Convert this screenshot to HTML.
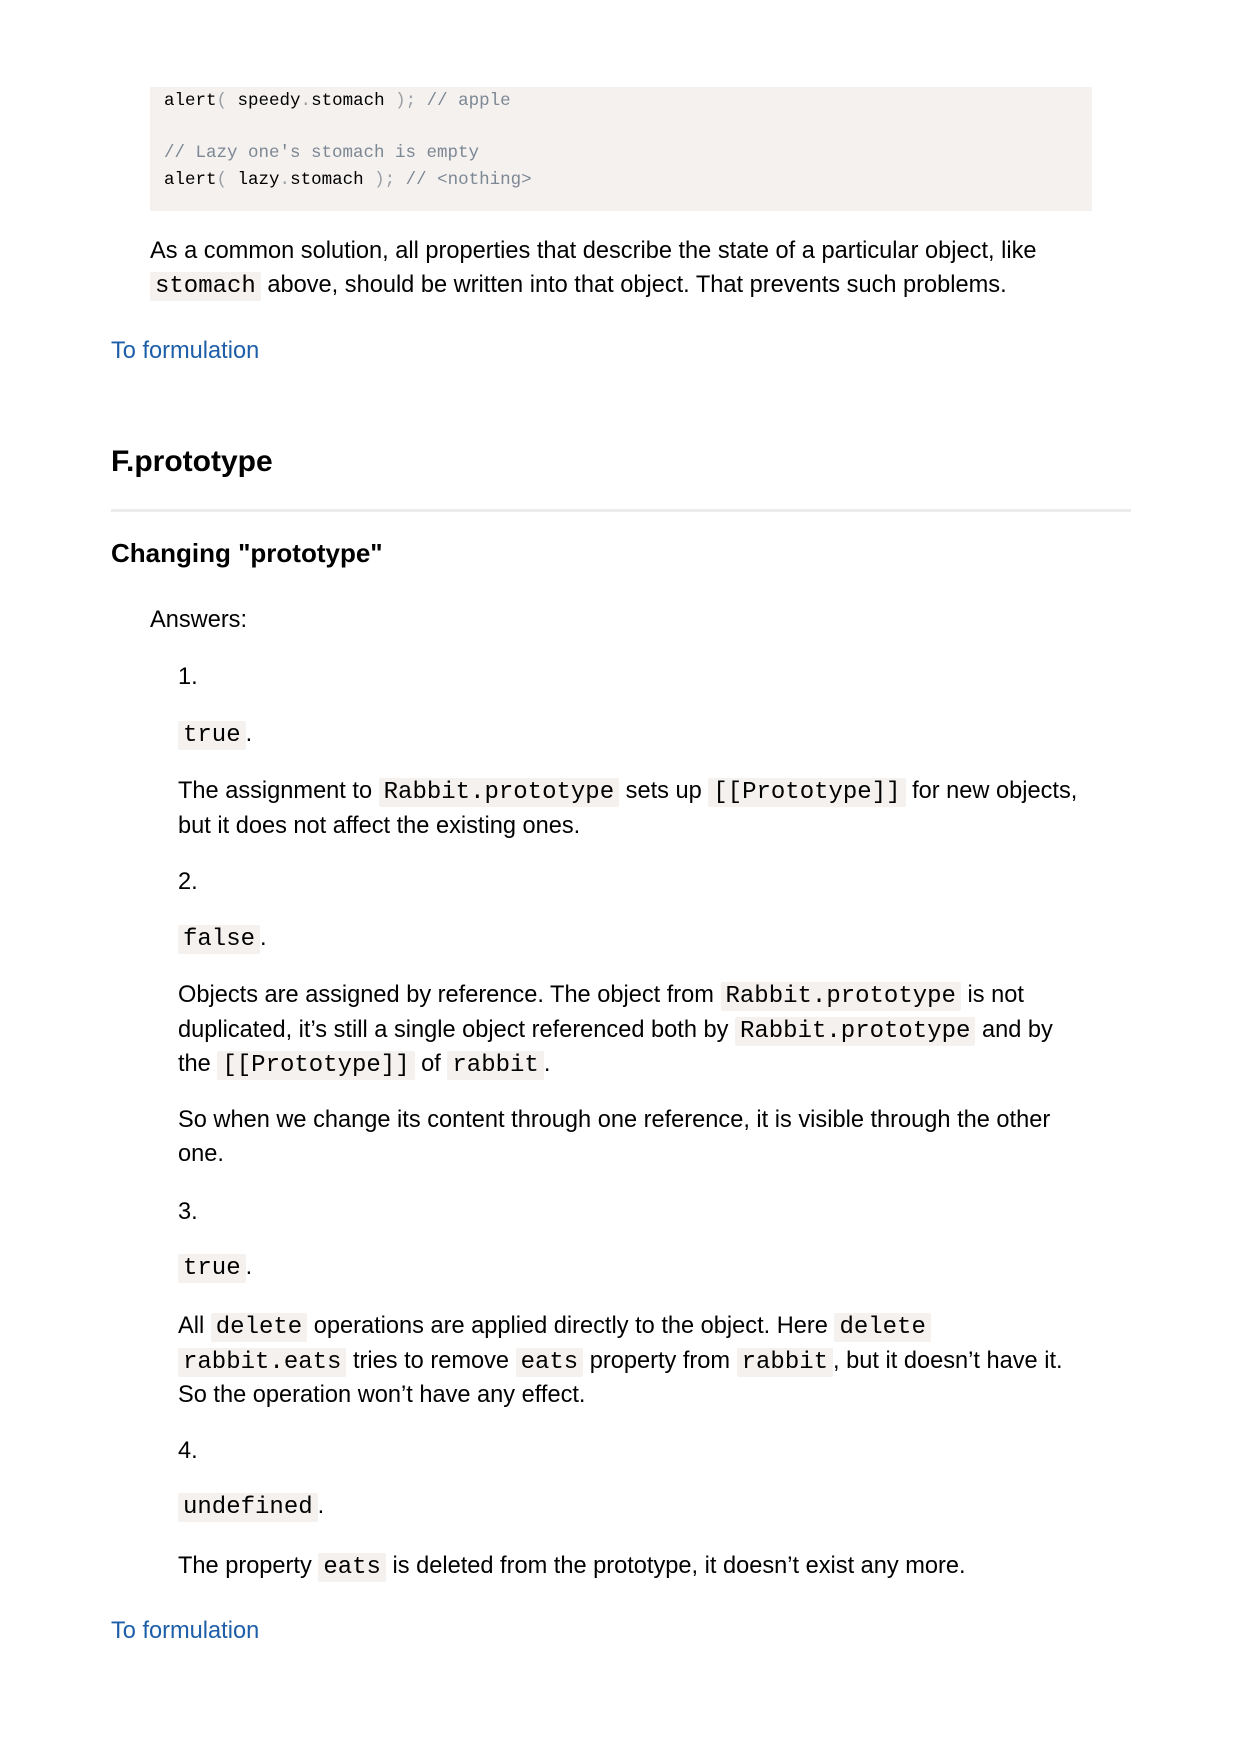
<!DOCTYPE html>
<html><head><meta charset="utf-8"><style>
body{margin:0;width:1240px;height:1754px;background:#fff;position:relative;font-family:"Liberation Sans",Arial,sans-serif;color:#000;overflow:hidden}
.a{position:absolute;white-space:nowrap;font-size:23.6px;line-height:33.5px}
code{font-family:"Liberation Mono",monospace;font-size:24px;background:#f4f1ef;padding:1px 5px;border-radius:2px}
.pre{position:absolute;left:150px;top:87px;width:942px;height:124px;background:#f4f1ef}
.pre div{position:absolute;left:14px;font-family:"Liberation Mono",monospace;font-size:17.5px;line-height:26px;white-space:pre;color:#000}
.c{color:#7d8894}.p{color:#9aa0a6}
.lnk{color:#1d5ea8}
h{position:absolute;font-weight:bold;white-space:nowrap}
</style></head><body>
<div class="pre">
<div style="top:1px">alert<span class="p">(</span> speedy<span class="p">.</span>stomach <span class="p">);</span> <span class="c">// apple</span></div>
<div style="top:53px"><span class="c">// Lazy one's stomach is empty</span></div>
<div style="top:80px">alert<span class="p">(</span> lazy<span class="p">.</span>stomach <span class="p">);</span> <span class="c">// &lt;nothing&gt;</span></div>
</div>
<div class="a" style="left:150px;top:235px">As a common solution, all properties that describe the state of a particular object, like<br><code>stomach</code> above, should be written into that object. That prevents such problems.</div>
<div class="a lnk" style="left:111px;top:335px">To formulation</div>
<h style="left:111px;top:443px;font-size:30px;line-height:38px">F.prototype</h>
<div style="position:absolute;left:111px;top:509px;width:1020px;height:3px;background:#ececec"></div>
<h style="left:111px;top:537px;font-size:26px;line-height:32px">Changing "prototype"</h>
<div class="a" style="left:150px;top:604px">Answers:</div>
<div class="a" style="left:178px;top:661px">1.</div>
<div class="a" style="left:178px;top:718px"><code>true</code>.</div>
<div class="a" style="left:178px;top:775px">The assignment to <code>Rabbit.prototype</code> sets up <code>[[Prototype]]</code> for new objects,<br>but it does not affect the existing ones.</div>
<div class="a" style="left:178px;top:866px">2.</div>
<div class="a" style="left:178px;top:922px"><code>false</code>.</div>
<div class="a" style="left:178px;top:979px">Objects are assigned by reference. The object from <code>Rabbit.prototype</code> is not<br>duplicated, it’s still a single object referenced both by <code>Rabbit.prototype</code> and by<br>the <code>[[Prototype]]</code> of <code>rabbit</code>.</div>
<div class="a" style="left:178px;top:1104px">So when we change its content through one reference, it is visible through the other<br>one.</div>
<div class="a" style="left:178px;top:1196px">3.</div>
<div class="a" style="left:178px;top:1251px"><code>true</code>.</div>
<div class="a" style="left:178px;top:1310px">All <code>delete</code> operations are applied directly to the object. Here <code>delete</code><br><code>rabbit.eats</code> tries to remove <code>eats</code> property from <code>rabbit</code>, but it doesn’t have it.<br>So the operation won’t have any effect.</div>
<div class="a" style="left:178px;top:1435px">4.</div>
<div class="a" style="left:178px;top:1490px"><code>undefined</code>.</div>
<div class="a" style="left:178px;top:1550px">The property <code>eats</code> is deleted from the prototype, it doesn’t exist any more.</div>
<div class="a lnk" style="left:111px;top:1615px">To formulation</div>
</body></html>
